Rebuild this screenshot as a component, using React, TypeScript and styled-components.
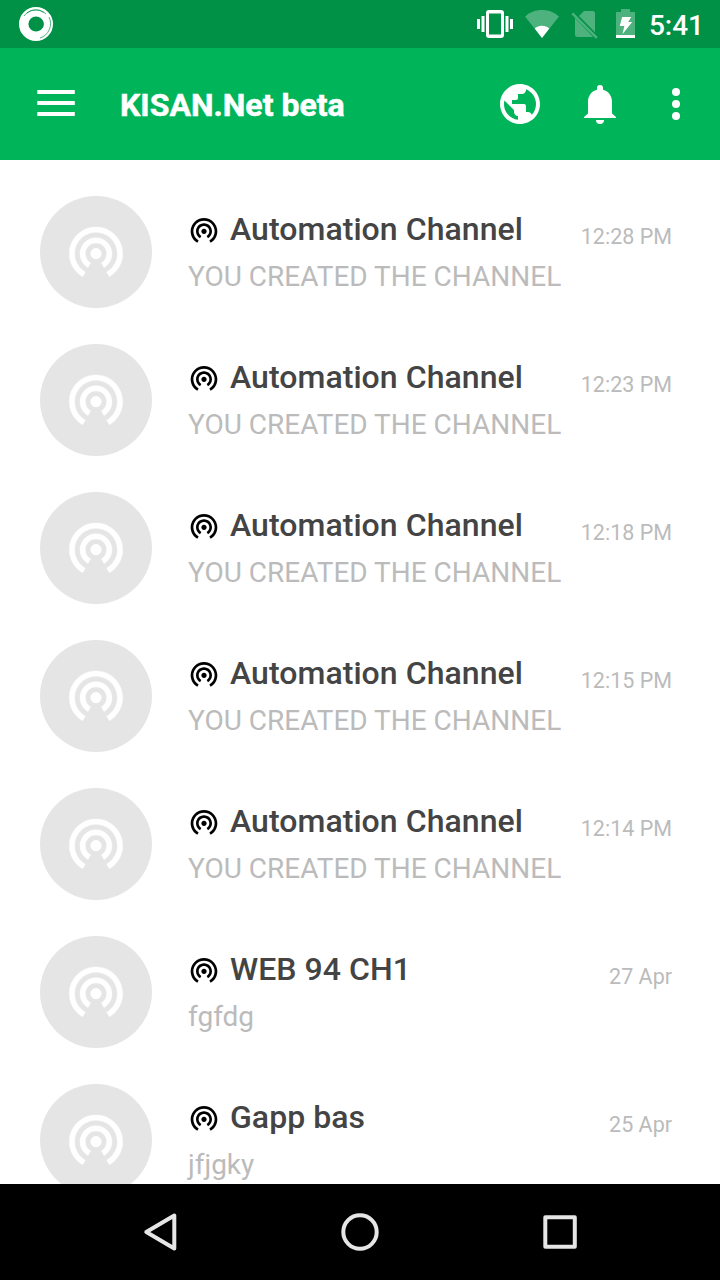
import React from "react";
import styled, { createGlobalStyle } from "styled-components";

const GlobalStyle = createGlobalStyle`
  * { box-sizing: border-box; }
  body { margin: 0; background: #fff; font-family: Roboto, "Liberation Sans", sans-serif; }
  svg { display: block; flex: none; }
`;

const Screen = styled.div`
  display: flex;
  flex-direction: column;
  width: 720px;
  height: 1280px;
  overflow: hidden;
  background: #fff;
`;

const StatusBar = styled.header`
  display: flex;
  align-items: center;
  justify-content: space-between;
  flex: none;
  height: 48px;
  padding: 0 16px 0 18px;
  background: #009147;
`;

const StatusIcons = styled.div`
  display: flex;
  align-items: center;
  height: 48px;
`;

const Clock = styled.span`
  margin-left: 11px;
  padding-top: 3px;
  color: #fff;
  font-size: 28px;
  font-weight: 500;
  line-height: 32px;
`;

const Toolbar = styled.div`
  display: flex;
  align-items: center;
  flex: none;
  height: 112px;
  padding: 0 16px 0 32px;
  background: #00b559;
`;

const Title = styled.h1`
  flex: 1;
  margin: 0 0 0 40px;
  padding-top: 2px;
  color: #fff;
  font-size: 32px;
  font-weight: 700;
  line-height: 40px;
  -webkit-text-stroke: 0.5px #fff;
`;

const Actions = styled.div`
  display: flex;
  align-items: center;
  gap: 32px;
`;

const List = styled.main`
  display: flex;
  flex-direction: column;
  flex: 1;
  min-height: 0;
  overflow: hidden;
  padding-top: 18px;
`;

const Row = styled.article`
  display: flex;
  flex: none;
  height: 148px;
  padding: 18px 48px 18px 40px;
`;

const Avatar = styled.div`
  display: flex;
  justify-content: center;
  flex: none;
  width: 112px;
  height: 112px;
  padding-top: 23px;
  border-radius: 50%;
  background: #e5e5e5;
  color: #fff;
`;

const Body = styled.div`
  flex: 1;
  min-width: 0;
  margin-left: 36px;
  padding-top: 14px;
`;

const NameLine = styled.div`
  display: flex;
  align-items: center;
  gap: 10px;
  height: 40px;
`;

const Name = styled.span`
  padding-bottom: 2px;
  color: #444;
  font-size: 32px;
  font-weight: 500;
  letter-spacing: 0.05px;
  line-height: 40px;
  white-space: nowrap;
`;

const Message = styled.div`
  margin-top: 10px;
  color: #bbb;
  font-size: 28px;
  line-height: 34px;
  white-space: nowrap;
`;

const Time = styled.time`
  padding-top: 27px;
  color: #bbb;
  font-size: 21.5px;
  line-height: 28px;
  white-space: nowrap;
`;

const NavBar = styled.nav`
  display: flex;
  align-items: center;
  justify-content: center;
  gap: 152px;
  flex: none;
  height: 96px;
  background: #000;
`;

const ChannelIcon = ({ size, weight = 0 }: { size: number; weight?: number }) => (
  <svg width={size} height={size} viewBox="0 0 24 24" fill="currentColor" stroke="currentColor" strokeWidth={weight}>
    <path d="M12 11c-1.1 0-2 .9-2 2s.9 2 2 2 2-.9 2-2-.9-2-2-2zm6 2c0-3.31-2.69-6-6-6s-6 2.69-6 6c0 2.22 1.21 4.15 3 5.19l1-1.74c-1.19-.7-2-1.97-2-3.45 0-2.21 1.79-4 4-4s4 1.79 4 4c0 1.48-.81 2.75-2 3.45l1 1.74c1.79-1.04 3-2.97 3-5.19zM12 3C6.48 3 2 7.48 2 13c0 3.7 2.01 6.92 4.99 8.65l1-1.73C5.61 18.53 4 15.96 4 13c0-4.42 3.58-8 8-8s8 3.58 8 8c0 2.96-1.61 5.53-4 6.92l1 1.73c2.99-1.73 5-4.95 5-8.65 0-5.52-4.48-10-10-10z" />
  </svg>
);

const created = "YOU CREATED THE CHANNEL";
const channels = [
  { name: "Automation Channel", message: created, time: "12:28 PM" },
  { name: "Automation Channel", message: created, time: "12:23 PM" },
  { name: "Automation Channel", message: created, time: "12:18 PM" },
  { name: "Automation Channel", message: created, time: "12:15 PM" },
  { name: "Automation Channel", message: created, time: "12:14 PM" },
  { name: "WEB 94 CH1", message: "fgfdg", time: "27 Apr" },
  { name: "Gapp bas", message: "jfjgky", time: "25 Apr" },
];

export default function App() {
  return (
    <Screen>
      <GlobalStyle />
      <StatusBar>
        <svg width="36" height="48" viewBox="0 0 36 48" fill="none">
          <circle cx="18" cy="24" r="12.3" stroke="#fff" strokeWidth="9.4" />
          <path d="M6 16A14.5 14.5 0 0 1 28 14M9 13A14 14 0 0 1 26 12.5M31 17A15 15 0 0 1 22 38" stroke="#009147" strokeWidth=".7" />
          <path d="M22 18a7 7 0 0 1 0 12" stroke="#009147" strokeWidth=".8" />
        </svg>
        <StatusIcons>
          <svg width="162" height="48" viewBox="476 0 162 48">
            <g fill="#fff">
              <path fillRule="evenodd" d="M489 10h12a3 3 0 0 1 3 3v22a3 3 0 0 1-3 3h-12a3 3 0 0 1-3-3V13a3 3 0 0 1 3-3zm0 3.500v21h12v-21z" />
              <path d="M477 19h3v10h-3zM481.500 16h3v16h-3zM505.500 16h3v16h-3zM510 19h3v10h-3z" />
            </g>
            <path fill="#fff" fillOpacity=".3" d="M542 38 525 16.500C530 12 536 10 542 10s12 2 17 6.500z" />
            <path fill="#fff" d="M542 38l-7.300-9.500c2-1.800 4.500-2.700 7.300-2.700s5.300.9 7.300 2.700z" />
            <g fill="#fff" fillOpacity=".3">
              <path d="M584 11h8.500a2.500 2.500 0 0 1 2.500 2.500v18.700L579 16zM575 18l18 18.800-1 .2h-14.500a2.500 2.500 0 0 1-2.500-2.500z" />
              <path d="m573.200 12.500-1.700 1.700 24.500 24.600 1.700-1.800z" />
              <path fillRule="evenodd" d="M621 9h9v3h5v23h-19V12h5zm1 8-2.300 9h4.600l-2 8.500L632.300 22h-4l3-5z" />
            </g>
            <path fill="#fff" d="M622 17h9.300l-3 5h4l-10 12.500 2-8.500h-4.600zM616 35h19v3h-19z" />
          </svg>
          <Clock>5:41</Clock>
        </StatusIcons>
      </StatusBar>
      <Toolbar>
        <svg width="48" height="48" viewBox="0 0 48 48" fill="#fff">
          <path d="M5.300 10h37.500v4H5.300zM5.300 21h37.500v4H5.300zM5.300 32h37.500v4H5.300z" />
        </svg>
        <Title>KISAN.Net beta</Title>
        <Actions>
          <svg width="48" height="48" viewBox="0 0 24 24" fill="#fff">
            <path d="M12 2C6.480 2 2 6.480 2 12s4.480 10 10 10 10-4.480 10-10S17.520 2 12 2zm-1 17.930c-3.950-.49-7-3.850-7-7.930 0-.62.08-1.210.21-1.790L9 15v1c0 1.100.9 2 2 2v1.930zm6.900-2.540c-.26-.81-1-1.390-1.900-1.390h-1v-3c0-.55-.45-1-1-1H8v-2h2c.55 0 1-.45 1-1V7h2c1.100 0 2-.9 2-2v-.41c2.930 1.190 5 4.060 5 7.410 0 2.080-.8 3.970-2.100 5.390z" />
          </svg>
          <svg width="48" height="48" viewBox="0 0 48 48" fill="#fff">
            <path d="M24 5a3 3 0 0 1 3 3v1.700c5.400 1.400 9 6 9 11.800v12l4 3.500v1H8v-1l4-3.500v-12c0-5.800 3.600-10.400 9-11.800V8a3 3 0 0 1 3-3zM20 40h8a4 4 0 0 1-8 0z" />
          </svg>
          <svg width="48" height="48" viewBox="0 0 48 48" fill="#fff">
            <circle cx="20" cy="12" r="4" />
            <circle cx="20" cy="24" r="4" />
            <circle cx="20" cy="36" r="4" />
          </svg>
        </Actions>
      </Toolbar>
      <List>
        {channels.map((channel, index) => (
          <Row key={index}>
            <Avatar><ChannelIcon size={64} weight={0.15} /></Avatar>
            <Body>
              <NameLine>
                <ChannelIcon size={32} />
                <Name>{channel.name}</Name>
              </NameLine>
              <Message>{channel.message}</Message>
            </Body>
            <Time>{channel.time}</Time>
          </Row>
        ))}
      </List>
      <NavBar>
        <svg width="48" height="48" viewBox="0 0 48 48" fill="none" stroke="#e6e6e6" strokeWidth="4" strokeLinejoin="round">
          <path d="M10.300 24 38.300 7.500v33z" />
        </svg>
        <svg width="48" height="48" viewBox="0 0 48 48" fill="none" stroke="#e6e6e6" strokeWidth="4">
          <circle cx="24" cy="24" r="16.700" />
        </svg>
        <svg width="48" height="48" viewBox="0 0 48 48" fill="none" stroke="#e6e6e6" strokeWidth="4" strokeLinejoin="round">
          <path d="M9.300 9.300h29.500v29.500H9.300z" />
        </svg>
      </NavBar>
    </Screen>
  );
}
